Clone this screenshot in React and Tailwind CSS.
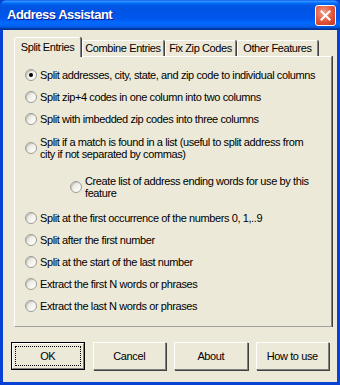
import React from "react";

const Radio = ({ checked }) => (
  <span className="flex h-[12px] w-[12px] shrink-0 items-center justify-center rounded-full border border-[#9d9d98] bg-[linear-gradient(135deg,#d8d6cc,#f4f3ee_55%,#ffffff)] shadow-[inset_1px_1px_0_#c8c6bc]">
    {checked && <span className="h-[4px] w-[4px] rounded-full bg-black" />}
  </span>
);

const Option = ({ checked, children, className = "h-[22px]" }) => (
  <label className={`flex items-center gap-[3px] pl-[10px] ${className}`}>
    <Radio checked={checked} />
    <span className="whitespace-nowrap leading-[12px]">{children}</span>
  </label>
);

const tabs = [
  { label: "Combine Entries", w: "w-[82px]" },
  { label: "Fix Zip Codes", w: "w-[71px]" },
  { label: "Other Features", w: "w-[81px]" },
];

const Button = ({ children, isDefault }) =>
  isDefault ? (
    <button className="h-[28px] w-[74px] border border-black bg-[#ece9d8] p-0">
      <span className="flex h-full w-full items-center justify-center border-t border-l border-white border-r border-b border-r-[#808080] border-b-[#808080] p-[2px]">
        <span className="flex h-full w-full items-center justify-center border border-dotted border-black">
          {children}
        </span>
      </span>
    </button>
  ) : (
    <button className="flex h-[28px] w-[74px] items-center justify-center border-t border-l border-white border-r border-b border-r-[#808080] border-b-[#808080] bg-[#ece9d8] shadow-[1px_1px_0_#404040]">
      {children}
    </button>
  );

export default function App() {
  return (
    <div
      className="flex h-[385px] w-[340px] flex-col bg-[#0842d4] text-[11px] tracking-[-0.4px] text-black"
      style={{ fontFamily: '"Liberation Sans", Arial, sans-serif' }}
    >
      {/* title bar */}
      <div className="flex h-[30px] shrink-0 items-center justify-between rounded-t-[7px] bg-[linear-gradient(to_bottom,#0058ee_0%,#3a93ff_4%,#288eff_6%,#127dff_8%,#036ffc_10%,#0262ee_14%,#0057e5_20%,#0054e3_24%,#0055eb_56%,#005bf5_66%,#026afe_76%,#0062ef_86%,#0052d6_92%,#0040ab_94%,#003092_100%)] pr-[4px] pl-[7px]">
        <span className="text-[13px] font-bold tracking-[-0.5px] text-white [text-shadow:1px_1px_0_#0a1e8c]">
          Address Assistant
        </span>
        <span className="flex h-[21px] w-[21px] items-center justify-center rounded-[3px] border border-white bg-[radial-gradient(circle_at_40%_35%,#f0a08a,#e2553a_55%,#c2351c)]">
          <svg width="11" height="11" viewBox="0 0 11 11">
            <path d="M1.5 1.5 L9.5 9.5 M9.5 1.5 L1.5 9.5" stroke="white" strokeWidth="2" strokeLinecap="square" />
          </svg>
        </span>
      </div>

      {/* body */}
      <div className="mr-[3px] mb-[3px] ml-[3px] flex flex-1 flex-col bg-[#ece9d8] px-[8px] pt-[7px]">
        {/* tabs */}
        <div className="relative z-10 flex h-[19px] items-end pl-[3px]">
          <div className="-mb-[1px] flex h-[20px] w-[67px] items-center justify-center whitespace-nowrap rounded-t-[2px] border-t border-l border-white border-r border-r-[#808080] bg-[#ece9d8] shadow-[1px_0_0_#404040]">
            Split Entries
          </div>
          {tabs.map((t) => (
            <div
              key={t.label}
              className={`ml-[1px] flex h-[16px] ${t.w} items-center justify-center whitespace-nowrap rounded-t-[2px] border-t border-l border-white border-r border-r-[#808080] shadow-[1px_0_0_#404040]`}
            >
              {t.label}
            </div>
          ))}
        </div>

        {/* panel */}
        <div className="ml-[3px] flex h-[271px] w-[318px] flex-col border-t border-l border-white border-r border-b border-r-[#808080] border-b-[#a0a0a0] pt-[7px] shadow-[1px_0_0_#404040]">
          <Option checked>Split addresses, city, state, and zip code to individual columns</Option>
          <Option>Split zip+4 codes in one column into two columns</Option>
          <Option>Split with imbedded zip codes into three columns</Option>
          <Option className="h-[36px]">
            Split if a match is found in a list (useful to split address from
            <br />
            city if not separated by commas)
          </Option>
          <label className="flex h-[41px] items-center gap-[3px] pl-[55px]">
            <Radio />
            <span className="whitespace-nowrap leading-[12px]">
              Create list of address ending words for use by this
              <br />
              feature
            </span>
          </label>
          <Option>Split at the first occurrence of the numbers 0, 1,..9</Option>
          <Option>Split after the first number</Option>
          <Option>Split at the start of the last number</Option>
          <Option>Extract the first N words or phrases</Option>
          <Option>Extract the last N words or phrases</Option>
        </div>

        {/* buttons */}
        <div className="mt-[15px] flex gap-[8px]">
          <Button isDefault>OK</Button>
          <Button>Cancel</Button>
          <Button>About</Button>
          <Button>How to use</Button>
        </div>
      </div>
    </div>
  );
}
